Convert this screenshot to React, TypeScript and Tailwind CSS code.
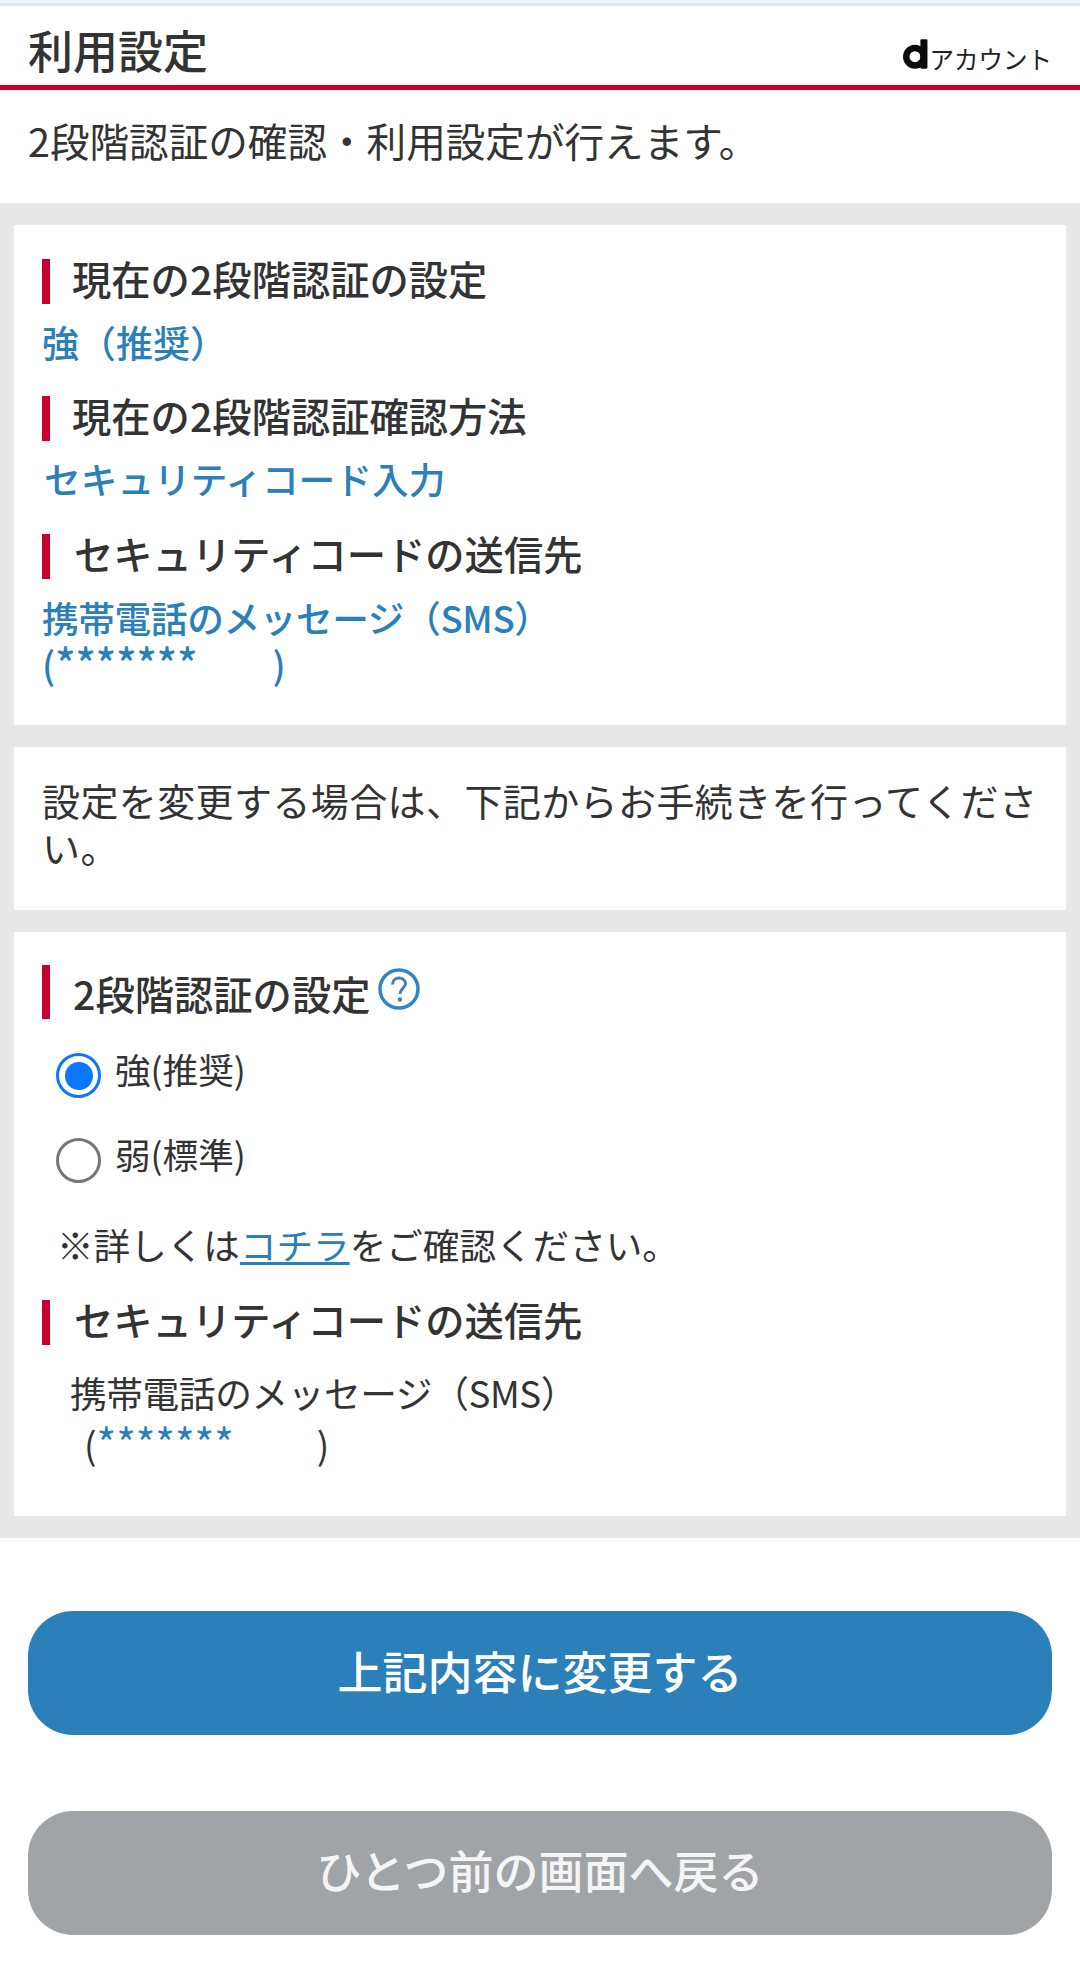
const font = { fontFamily: '"Noto Sans CJK JP", "Noto Sans", sans-serif' };

function Heading({ children, mt = "" }: { children: React.ReactNode; mt?: string }) {
  return (
    <div className={`flex h-[45px] items-center border-l-[8px] border-[#c9002f] pl-[22px] ${mt}`}>
      <span className="-mt-[8px] text-[39.3px] leading-[45px] font-medium text-[#333333]">{children}</span>
    </div>
  );
}

function Radio({ checked, label }: { checked: boolean; label: string }) {
  return (
    <div className="flex h-[45px] items-start">
      <span className={`flex h-[45px] w-[45px] shrink-0 items-center justify-center rounded-full border-[3px] ${checked ? "border-[#0b76ff]" : "border-[#767676]"}`}>
        {checked && <span className="h-[28px] w-[28px] rounded-full bg-[#0b76ff]" />}
      </span>
      <span className="ml-[14px] -mt-[7px] text-[35.6px] leading-[46px] text-[#333333]">{label}</span>
    </div>
  );
}

export default function App() {
  return (
    <div className="flex h-[1978px] w-[1080px] flex-col overflow-hidden bg-white" style={font}>
      <div className="h-[6px] border-b-[3px] border-[#dfe6ec] bg-[#eef5fa]" />
      <header className="flex h-[84px] items-end justify-between border-b-[5px] border-[#c9002f] px-[28px] pb-[2px]">
        <h1 className="text-[45px] leading-[66px] font-medium text-[#333333]">利用設定</h1>
        <div className="mb-[14px] flex items-end">
          <svg viewBox="0 0 23 27" className="h-[30px] w-[25px]">
            <rect x="16" y="0" width="6.500" height="27" rx="1" fill="#0a0a0a" />
            <circle cx="11" cy="16" r="8" fill="none" stroke="#0a0a0a" strokeWidth="6" />
          </svg>
          <span className="ml-[2px] -mb-[5px] text-[24.500px] leading-[30px] text-[#222222]">アカウント</span>
        </div>
      </header>
      <p className="flex h-[113px] items-center px-[28px] pb-[14px] text-[39.6px] text-[#333333]">2段階認証の確認・利用設定が行えます。</p>

      <main className="flex flex-col gap-[22px] bg-[#e8e8e8] px-[14px] py-[22px]">
        <section className="h-[500px] bg-white px-[28px] pt-[34px]">
          <Heading>現在の2段階認証の設定</Heading>
          <p className="mt-[14px] h-[48px] text-[37px] leading-[48px] font-medium text-[#2a80b9]">強（推奨）</p>
          <Heading mt="mt-[30px]">現在の2段階認証確認方法</Heading>
          <p className="mt-[13px] h-[48px] pl-[2px] text-[36.7px] leading-[48px] font-medium text-[#2a80b9]">セキュリティコード入力</p>
          <Heading mt="mt-[32px]">
            <span className="pl-[2px]">セキュリティコードの送信先</span>
          </Heading>
          <p className="mt-[14px] text-[36.7px] leading-[48px] font-medium tracking-[-0.4px] text-[#2a80b9]">携帯電話のメッセージ（SMS）</p>
          <p className="whitespace-pre text-[37px] leading-[45px] font-medium text-[#2a80b9]">
            (<span className="text-[42px] leading-none">*******</span>{"         )"}
          </p>
        </section>

        <section className="h-[163px] bg-white px-[28px] pt-[29px] text-[38px] leading-[47px] tracking-[0.4px] text-[#333333]">
          設定を変更する場合は、下記からお手続きを行ってください。
        </section>

        <section className="h-[584px] bg-white px-[28px] pt-[33px]">
          <div className="flex items-start">
            <div className="flex h-[54px] items-center border-l-[8px] border-[#c9002f] pl-[23px] pt-[2px] text-[39.3px] font-medium text-[#333333]">2段階認証の設定</div>
            <svg viewBox="0 0 42 42" className="mt-[3px] ml-[8px] h-[42px] w-[42px] blur-[0.6px]">
              <circle cx="21" cy="21" r="19" fill="#ffffff" stroke="#2f86c2" strokeWidth="3.500" />
              <path d="M14.500 16.500c0-4 3-6.500 6.500-6.500s6.500 2.500 6.500 5.500c0 4.500-5.500 5-5.500 10.500" fill="none" stroke="#4a7fa8" strokeWidth="3" />
              <circle cx="22" cy="31.500" r="2.200" fill="#4a7fa8" />
            </svg>
          </div>
          <div className="mt-[34px] flex flex-col gap-[40px] pl-[14px]">
            <Radio checked label="強(推奨)" />
            <Radio checked={false} label="弱(標準)" />
          </div>
          <p className="mt-[35px] pl-[15px] text-[36.6px] leading-[54px] text-[#333333]">
            ※詳しくは<a className="text-[#2a80b9] underline">コチラ</a>をご確認ください。
          </p>
          <Heading mt="mt-[28px]">
            <span className="pl-[2px]">セキュリティコードの送信先</span>
          </Heading>
          <p className="mt-[22px] pl-[28px] text-[36.7px] leading-[50px] tracking-[-0.4px] text-[#333333]">携帯電話のメッセージ（SMS）</p>
          <p className="mt-[1px] whitespace-pre pl-[42px] text-[37px] leading-[52px] text-[#333333]">
            (<span className="text-[42px] leading-none text-[#2a80b9]">*******</span>{"          )"}
          </p>
        </section>
      </main>

      <div className="flex flex-col gap-[76px] px-[28px] pt-[73px]">
        <button className="h-[124px] rounded-[45px] bg-[#2c80b9] pb-[5px] text-[45px] font-medium text-white">上記内容に変更する</button>
        <button className="h-[124px] rounded-[45px] bg-[#a0a4a7] pb-[6px] text-[45px] font-medium text-[#f5f5f5]">ひとつ前の画面へ戻る</button>
      </div>
    </div>
  );
}
